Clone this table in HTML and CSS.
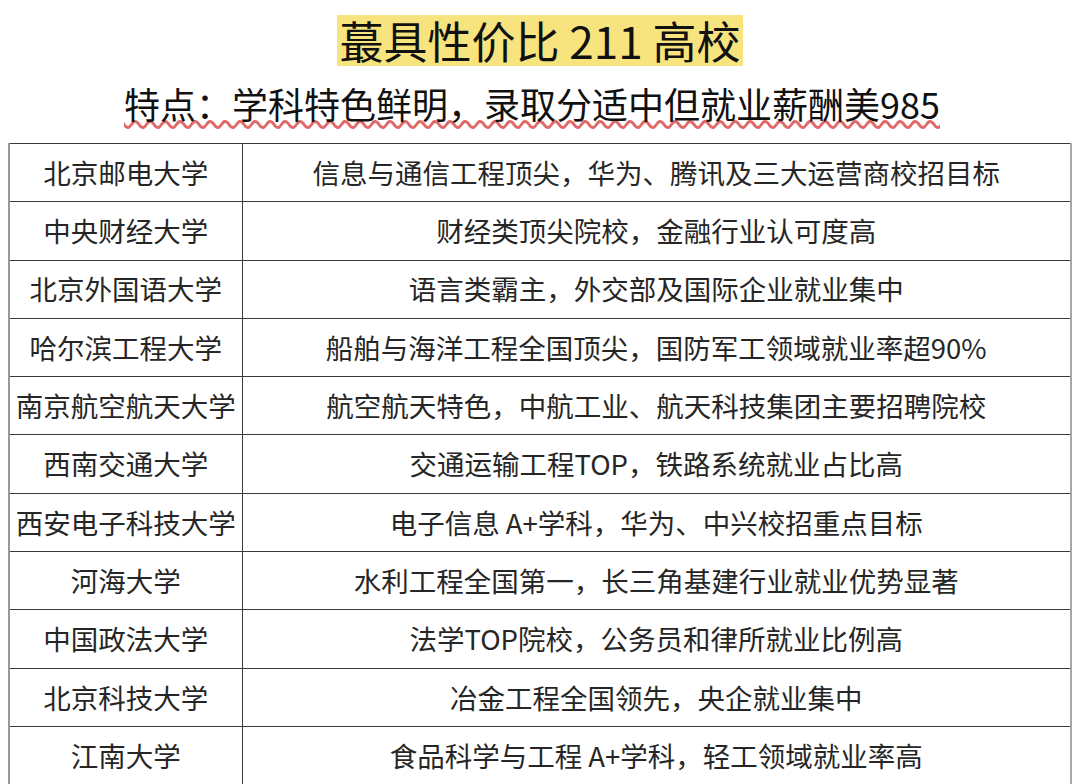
FILE: index.html
```html
<!DOCTYPE html>
<html lang="zh-CN">
<head>
<meta charset="utf-8">
<link rel="stylesheet" href="styles.css">
</head>
<body>
<div class="page">
  <header class="head">
    <h1 class="title"><span class="hl">蕞具性价比 211 高校</span></h1>
    <p class="sub">特点：学科特色鲜明，录取分适中但就业薪酬美985</p>
  </header>
  <table class="grid">
    <colgroup><col class="c1"><col class="c2"></colgroup>
    <tbody>
      <tr><td>北京邮电大学</td><td>信息与通信工程顶尖，华为、腾讯及三大运营商校招目标</td></tr>
      <tr><td>中央财经大学</td><td>财经类顶尖院校，金融行业认可度高</td></tr>
      <tr><td>北京外国语大学</td><td>语言类霸主，外交部及国际企业就业集中</td></tr>
      <tr><td>哈尔滨工程大学</td><td>船舶与海洋工程全国顶尖，国防军工领域就业率超90%</td></tr>
      <tr><td>南京航空航天大学</td><td>航空航天特色，中航工业、航天科技集团主要招聘院校</td></tr>
      <tr><td>西南交通大学</td><td>交通运输工程TOP，铁路系统就业占比高</td></tr>
      <tr><td>西安电子科技大学</td><td>电子信息 A+学科，华为、中兴校招重点目标</td></tr>
      <tr><td>河海大学</td><td>水利工程全国第一，长三角基建行业就业优势显著</td></tr>
      <tr><td>中国政法大学</td><td>法学TOP院校，公务员和律所就业比例高</td></tr>
      <tr><td>北京科技大学</td><td>冶金工程全国领先，央企就业集中</td></tr>
      <tr><td>江南大学</td><td>食品科学与工程 A+学科，轻工领域就业率高</td></tr>
    </tbody>
  </table>
</div>
</body>
</html>
```

FILE: styles.css
```css
html, body {
  margin: 0;
  padding: 0;
  background: #ffffff;
}
body {
  font-family: "Noto Sans CJK SC", "Noto Sans", sans-serif;
  color: #262626;
  width: 1080px;
  height: 784px;
  overflow: hidden;
}
.page {
  display: flex;
  flex-direction: column;
}
.head {
  display: flex;
  flex-direction: column;
  align-items: center;
  padding-top: 15px;
}
.title {
  margin: 0;
  font-size: 44px;
  font-weight: 400;
  line-height: 51px;
  color: #111;
}
.hl {
  display: inline-block;
  background: #f8e47e;
  padding: 0 3px;
}
.sub {
  margin: 13px 0 0 0;
  padding-right: 16px;
  font-size: 36px;
  line-height: 48px;
  color: #111;
  text-decoration: underline wavy #e06a6a;
  text-decoration-thickness: 2.5px;
  text-underline-offset: 1px;
}
.grid {
  margin: 16px 0 0 8px;
  width: 1064px;
  border-collapse: collapse;
  table-layout: fixed;
  font-size: 27.5px;
}
.c1 { width: 233px; }
.grid td {
  height: 57.3px;
  padding: 0;
  text-align: center;
  vertical-align: middle;
  border: 1px solid #3a3a3a;
  line-height: 1;
  white-space: nowrap;
}
.grid td:first-child {
  border-left: 2px solid #9a9a9a;
}
.grid td:last-child {
  border-right: 2px solid #a8a8a8;
}
```
